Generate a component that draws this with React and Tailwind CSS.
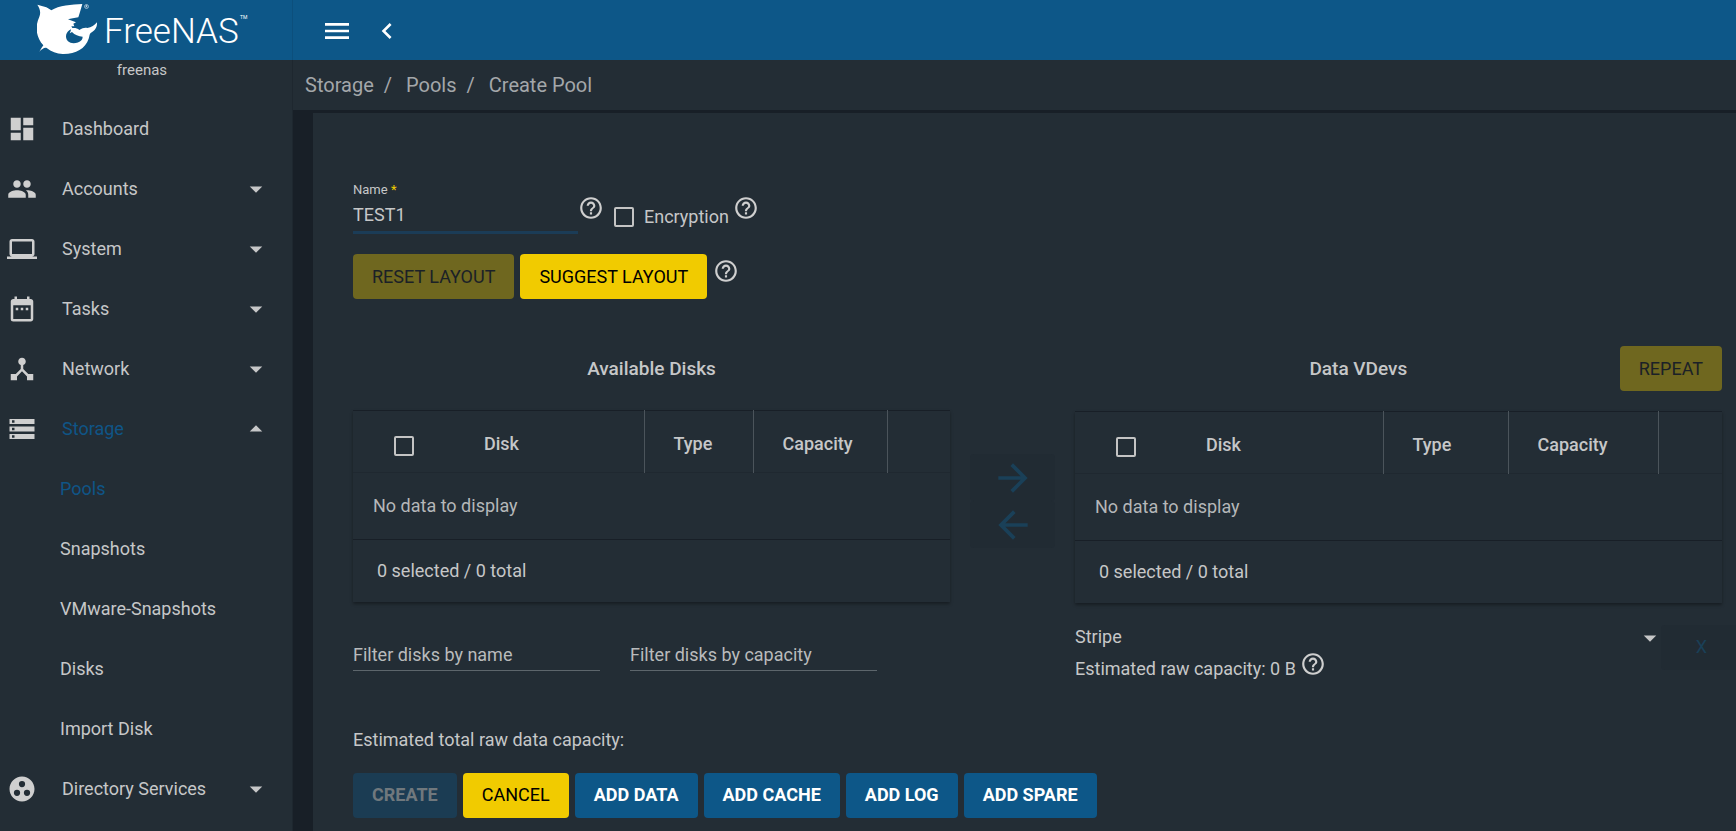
import React, { useState } from 'react';
import {
  MdDashboard,
  MdPeople,
  MdLaptop,
  MdDateRange,
  MdDeviceHub,
  MdStorage,
  MdGroupWork,
  MdMenu,
  MdChevronLeft,
  MdArrowDropDown,
  MdArrowDropUp,
  MdHelpOutline,
  MdArrowForward,
  MdArrowBack
} from 'react-icons/md';

const menuItems = [
  { name: 'Dashboard', icon: MdDashboard },
  { name: 'Accounts', icon: MdPeople, expandable: true },
  { name: 'System', icon: MdLaptop, expandable: true },
  { name: 'Tasks', icon: MdDateRange, expandable: true },
  { name: 'Network', icon: MdDeviceHub, expandable: true },
  {
    name: 'Storage',
    icon: MdStorage,
    expandable: true,
    children: ['Pools', 'Snapshots', 'VMware-Snapshots', 'Disks', 'Import Disk']
  },
  { name: 'Directory Services', icon: MdGroupWork, expandable: true }
];

const Logo = () => (
  <svg viewBox="0 0 216 54" className="h-[54px] w-[216px]" role="img" aria-label="FreeNAS">
    {/* Shark */}
    <g transform="translate(-5 -2) scale(0.3333)">
      <path
        fill="#fff"
        d="M16 14 C30 18 46 20 58 31 C80 16 120 14 151 12 C147 26 143 40 139 52 C128 55 116 55 108 58 C116 61 124 63 132 67 L124 71 L127 79 L118 79 L121 84 C128 83 136 84 142 90 C152 84 158 82 166 84 C178 82 188 76 195 67 C196 80 190 92 176 99 C172 103 173 108 170 116 C160 146 130 163 92 162 C74 161 58 155 44 144 C36 142 30 148 22 155 C26 148 30 142 34 136 C12 112 8 80 22 50 C27 38 24 26 16 14 Z"
      />
      <path
        fill="#0d5788"
        d="M117 88 C102 95 97 112 108 124 C118 133 138 131 149 120 C151 117 152 114 152 110 C140 109 128 105 120 96 L113 100 L116 93 Z"
      />
    </g>
    <g fill="none" stroke="#fff" strokeWidth="0.500">
      <circle cx="49.500" cy="4.500" r="2" />
      <path d="M49 5.500 V3.500 H50 V4.500 H49 M49.600 4.500 L50.200 5.500" />
    </g>
    <text x="67" y="41" fill="#fff" fontFamily="Roboto, sans-serif" fontSize="35" fontWeight="300">
      FreeNAS
    </text>
    <text x="203" y="17" fill="#fff" fontFamily="Roboto, sans-serif" fontSize="5">TM</text>
  </svg>
);

const Sidebar = () => (
  <aside className="flex w-[293px] shrink-0 flex-col">
    <div className="flex h-[60px] shrink-0 items-start border-r border-[#0c4f7c] bg-[#0d5788] pt-[2px] pl-[37px]">
      <Logo />
    </div>
    <div className="flex-1 border-r border-[#1e272f]">
      <p className="pr-2 text-center text-[15px] leading-5">freenas</p>
      <nav className="pt-[19px]">
        {menuItems.map(({ name, icon: Icon, expandable, children }) => (
          <div key={name}>
            <a href="#" className="flex h-[60px] items-center pl-[7px] pr-[21px]">
              <Icon className="size-[30px] text-[#cfcfcf]" />
              <span className={`ml-[25px] flex-1 ${children ? 'text-[#0f5587]' : ''}`}>{name}</span>
              {expandable && (children
                ? <MdArrowDropUp className="size-[30px]" />
                : <MdArrowDropDown className="size-[30px]" />)}
            </a>
            {children && children.map(child => (
              <a
                key={child}
                href="#"
                className={`flex h-[60px] items-center pl-[60px] ${child === 'Pools' ? 'text-[#0f5587]' : ''}`}
              >
                {child}
              </a>
            ))}
          </div>
        ))}
      </nav>
    </div>
  </aside>
);

const Help = ({ label }) => (
  <button aria-label={label} className="text-[#cfcfcf]">
    <MdHelpOutline className="size-[26px]" />
  </button>
);

const Checkbox = (props) => (
  <input
    type="checkbox"
    className="size-5 shrink-0 appearance-none rounded-[2px] border-2 border-[#c4c4c4] checked:bg-[#0d5788]"
    {...props}
  />
);

const buttonStyles = {
  primary: 'bg-[#0d5788] font-bold text-white',
  accent: 'bg-[#f1cb00] text-black',
  mutedPrimary: 'bg-[#1b3c53] font-bold text-[#70787d]',
  mutedAccent: 'bg-[#6f671f] text-[#1b2127]'
};

const Button = ({ kind, children, ...props }) => (
  <button className={`h-[45px] rounded-[4px] px-[19px] uppercase ${buttonStyles[kind]}`} {...props}>
    {children}
  </button>
);

const DiskTable = ({ label, widths }) => (
  <table className="w-full table-fixed border-t border-[#181f27] text-left shadow-[0_2px_3px_rgba(0,0,0,0.35)]">
    <colgroup>
      {widths.map((width, i) => <col key={i} className={width} />)}
    </colgroup>
    <thead>
      <tr className="h-[62px] border-b border-[#1f2830]">
        <th className="pl-[41px] pt-[14px]">
          <Checkbox aria-label={`Select all ${label}`} />
        </th>
        <th className="border-r border-[#4b545b] pl-6 pt-[5px] font-medium">Disk</th>
        <th className="border-r border-[#4b545b] pl-[29px] pt-[5px] font-medium">Type</th>
        <th className="border-r border-[#4b545b] pl-[29px] pt-[5px] font-medium">Capacity</th>
        <th></th>
      </tr>
    </thead>
    <tbody>
      <tr className="h-[67px] border-b border-[#181f27]">
        <td colSpan={5} className="pl-5 text-[#b5b7b9]">No data to display</td>
      </tr>
    </tbody>
    <tfoot>
      <tr className="h-[62px]">
        <td colSpan={5} className="pl-6">0 selected / 0 total</td>
      </tr>
    </tfoot>
  </table>
);

const CreatePool = () => {
  const [name, setName] = useState('TEST1');

  return (
    <main className="flex-1 bg-[#232d35] pl-10 pt-[67px]">
      <div className="flex items-start">
        <label className="flex w-[225px] flex-col border-b-3 border-[#1b3c57]">
          <span className="text-[13px] leading-5">
            Name <span className="text-[#f1cb00]">*</span>
          </span>
          <input
            value={name}
            onChange={e => setName(e.target.value)}
            className="h-[31px] w-full bg-transparent pb-[2px] outline-none"
          />
        </label>
        <div className="flex items-start pt-[15px]">
          <Help label="About the name" />
          <label className="ml-[10px] flex items-center gap-[10px] pt-[10px]">
            <Checkbox />
            Encryption
          </label>
          <div className="ml-1"><Help label="About encryption" /></div>
        </div>
      </div>

      <div className="mt-5 flex items-start gap-[6px]">
        <Button kind="mutedAccent" disabled>Reset Layout</Button>
        <Button kind="accent">Suggest Layout</Button>
        <div className="pt-1"><Help label="About layouts" /></div>
      </div>

      <div className="mt-[47px] flex">
        <section className="w-[597px]">
          <h2 className="h-[64px] pt-[9px] text-center text-[19px] font-medium leading-7">Available Disks</h2>
          <DiskTable
            label="available disks"
            widths={['w-[107px]', 'w-[184px]', 'w-[109px]', 'w-[134px]', '']}
          />
          <div className="mt-[37px] flex gap-[30px]">
            <input
              aria-label="Filter disks by name"
              placeholder="Filter disks by name"
              className="h-8 w-[247px] border-b border-[#5d666c] bg-transparent outline-none placeholder:text-[#b9bbbc]"
            />
            <input
              aria-label="Filter disks by capacity"
              placeholder="Filter disks by capacity"
              className="h-8 w-[247px] border-b border-[#5d666c] bg-transparent outline-none placeholder:text-[#b9bbbc]"
            />
          </div>
        </section>

        <div className="flex w-[125px] flex-col items-center pt-[108px] text-[#1a4058]">
          <button aria-label="Add disks" disabled className="flex h-[47px] w-[85px] items-center justify-center rounded-[4px] bg-[#212b33]">
            <MdArrowForward className="size-11" />
          </button>
          <button aria-label="Remove disks" disabled className="flex h-[47px] w-[85px] items-center justify-center rounded-[4px] bg-[#212b33]">
            <MdArrowBack className="size-11" />
          </button>
        </div>

        <section className="mr-[14px] flex-1">
          <div className="flex h-[65px] items-start">
            <h2 className="flex-1 pt-[9px] pl-[22px] text-center text-[19px] font-medium leading-7">Data VDevs</h2>
            <Button kind="mutedAccent" disabled>Repeat</Button>
          </div>
          <DiskTable
            label="vdev disks"
            widths={['w-[107px]', 'w-[201px]', 'w-[125px]', 'w-[150px]', '']}
          />
          <div className="mt-5 -mr-[14px] flex">
            <div className="flex-1">
              <div className="relative">
                <select aria-label="Layout type" className="h-[28px] w-full appearance-none bg-transparent outline-none">
                  <option>Stripe</option>
                </select>
                <MdArrowDropDown className="pointer-events-none absolute top-0 -right-1 size-[30px]" />
              </div>
              <div className="flex items-start gap-1">
                <span className="pt-[6px]">Estimated raw capacity: 0 B</span>
                <Help label="About raw capacity" />
              </div>
            </div>
            <button disabled className="mt-[2px] h-[45px] w-[75px] rounded-l-[4px] bg-[#212b33] pl-[6px] text-[#1a4058]">X</button>
          </div>
        </section>
      </div>

      <p className="mt-[47px]">Estimated total raw data capacity:</p>
      <div className="mt-[21px] flex gap-[6px] pb-[13px]">
        <Button kind="mutedPrimary" disabled>Create</Button>
        <Button kind="accent">Cancel</Button>
        <Button kind="primary">Add Data</Button>
        <Button kind="primary">Add Cache</Button>
        <Button kind="primary">Add Log</Button>
        <Button kind="primary">Add Spare</Button>
      </div>
    </main>
  );
};

const App = () => {
  return (
    <div className="flex h-screen overflow-hidden bg-[#232d35] font-[Roboto,sans-serif] text-[18px] leading-6 text-[#c6c7c8]">
      <Sidebar />
      <div className="flex min-w-0 flex-1 flex-col">
        <header className="flex h-[60px] shrink-0 items-center gap-[18px] bg-[#0d5788] pl-7 pt-[2px] text-white">
          <button aria-label="Toggle menu"><MdMenu className="size-8" /></button>
          <button aria-label="Back"><MdChevronLeft className="size-8" /></button>
        </header>
        <nav aria-label="Breadcrumb" className="flex h-[50px] shrink-0 items-center gap-[10px] pl-3 text-[20px] text-[#a3a7aa]">
          <a href="#">Storage</a>
          <span>/</span>
          <a href="#" className="ml-1">Pools</a>
          <span>/</span>
          <a href="#" className="ml-1">Create Pool</a>
        </nav>
        <div className="flex flex-1 bg-[#181f27] pl-5 pt-[3px]">
          <CreatePool />
        </div>
      </div>
    </div>
  );
};

export default App;
